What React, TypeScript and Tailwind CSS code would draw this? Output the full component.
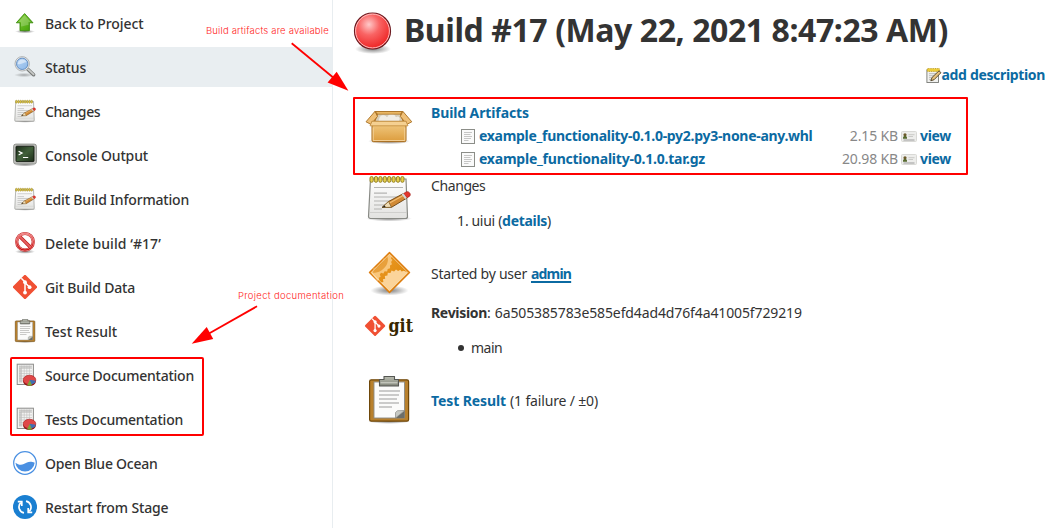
import type { ReactNode } from "react";

function Defs() {
  return (
    <svg className="absolute h-0 w-0" aria-hidden="true">
      <defs>
        <linearGradient id="green" x1="0" y1="0" x2="1" y2="1">
          <stop offset="0" stopColor="#8ad33c" />
          <stop offset="1" stopColor="#3f9f06" />
        </linearGradient>
        <radialGradient id="ball" cx="0.4" cy="0.32" r="0.65">
          <stop offset="0" stopColor="#ffc9c9" />
          <stop offset="0.45" stopColor="#f96464" />
          <stop offset="1" stopColor="#ef2929" />
        </radialGradient>
        <radialGradient id="shade">
          <stop offset="0" stopColor="#000" stopOpacity="0.5" />
          <stop offset="1" stopColor="#000" stopOpacity="0" />
        </radialGradient>
        <linearGradient id="paper" x1="0" y1="0" x2="0" y2="1">
          <stop offset="0" stopColor="#fff" />
          <stop offset="1" stopColor="#e2e2e0" />
        </linearGradient>
        <linearGradient id="card" x1="0" y1="0" x2="0" y2="1">
          <stop offset="0" stopColor="#f3cd88" />
          <stop offset="1" stopColor="#dc9c3c" />
        </linearGradient>
        <linearGradient id="gear" x1="0" y1="0" x2="1" y2="1">
          <stop offset="0" stopColor="#f0a030" />
          <stop offset="1" stopColor="#d98100" />
        </linearGradient>
        <linearGradient id="lens" x1="0" y1="0" x2="1" y2="1">
          <stop offset="0" stopColor="#b5d2f2" />
          <stop offset="1" stopColor="#8fbaea" />
        </linearGradient>
        <linearGradient id="screen" x1="0" y1="0" x2="1" y2="1">
          <stop offset="0" stopColor="#1d2d1a" />
          <stop offset="0.5" stopColor="#41603a" />
          <stop offset="1" stopColor="#1c2b19" />
        </linearGradient>
        <linearGradient id="stop" x1="0" y1="0" x2="0" y2="1">
          <stop offset="0" stopColor="#f08080" />
          <stop offset="1" stopColor="#c80f0f" />
        </linearGradient>
        <linearGradient id="clip" x1="0" y1="0" x2="0" y2="1">
          <stop offset="0" stopColor="#b9bcb0" />
          <stop offset="1" stopColor="#83867b" />
        </linearGradient>
      </defs>
    </svg>
  );
}

function UpArrow() {
  return (
    <svg viewBox="0 0 24 24" className="size-6">
      <ellipse cx="12" cy="20.500" rx="10" ry="1.800" fill="url(#shade)" />
      <path d="M11.600 2.600 20 11.800h-3.600v7.900H7v-7.900H3.300z" fill="url(#green)" stroke="#3a8a0c" strokeWidth="0.900" strokeLinejoin="round" />
      <path d="M11.600 4.200 17.800 11h-2.300v3c-3 0-5 1.500-7.500 1.500V11H5.400z" fill="#fff" opacity="0.220" />
    </svg>
  );
}

function Magnifier() {
  return (
    <svg viewBox="0 0 24 24" className="size-6">
      <ellipse cx="11" cy="20" rx="10" ry="2.200" fill="url(#shade)" opacity="0.600" />
      <path d="m14.800 14.300 5.800 5.400" stroke="#777a78" strokeWidth="3.600" strokeLinecap="round" />
      <path d="m15 14.100 5.600 5.200" stroke="#c9cbc9" strokeWidth="1.800" strokeLinecap="round" />
      <circle cx="9.200" cy="8.800" r="7.200" fill="#ececec" stroke="#a2a5a4" strokeWidth="0.800" />
      <circle cx="9.200" cy="8.800" r="5.700" fill="url(#lens)" stroke="#4d7cb6" strokeWidth="0.800" />
      <path d="M4.800 8.900c0-5 8-5.800 8.600-1.600-3 .2-5 2.600-8.600 1.600z" fill="#fff" opacity="0.500" />
    </svg>
  );
}

const rings = [5, 9.4, 13.8, 18.2, 22.6, 27, 31.4, 35.8];

function Notepad({ className }: { className: string }) {
  return (
    <svg viewBox="0 0 48 48" className={className}>
      <ellipse cx="24" cy="44.500" rx="23" ry="3" fill="url(#shade)" />
      <path d="M5.500 5h35.500l1.500 37.500a2 2 0 0 1-2 2h-35a2 2 0 0 1-2-2z" fill="url(#paper)" stroke="#888a85" strokeWidth="1.200" />
      <path d="M4.500 38.500h37.500" stroke="#c9c9c6" strokeWidth="0.800" />
      {rings.map((x) => (
        <rect key={x} x={x} y="2.500" width="3.200" height="5.800" rx="1.500" fill="#e4cd4a" stroke="#8f7a1c" strokeWidth="0.900" />
      ))}
      <path d="M9 13.500h29M9 19.200h13M9 23h25M9 27h22M9 31h11M9 35h8" stroke="#b4b4b2" strokeWidth="1.200" />
      <path d="m17 33.500 6.500-6 15-8 3.500 4.500-15.500 9.300z" fill="#d18a35" stroke="#6b4310" strokeWidth="0.900" strokeLinejoin="round" />
      <path d="m24.500 29 15-8.300" stroke="#f3bf74" strokeWidth="1.300" />
      <path d="m17 33.500 6.500-6 3 5.800z" fill="#efdcb5" stroke="#7a5a25" strokeWidth="0.700" />
      <path d="m17 33.500 2.600-2.300 1 1.700z" fill="#222" />
      <path d="m38.500 19.600 2.700-1.700c2.500-1.200 5.500 2.300 3.400 4.300l-2.500 1.700z" fill="#e3352c" stroke="#9c1a14" strokeWidth="0.600" />
      <path d="m36.600 20.300 1.900-1 3.400 4.700-1.800.9z" fill="#d6d6d6" />
    </svg>
  );
}

function Terminal() {
  return (
    <svg viewBox="0 0 24 24" className="size-6">
      <ellipse cx="12" cy="21.800" rx="11.500" ry="1.600" fill="url(#shade)" />
      <rect x="0.600" y="1.100" width="22.800" height="19.900" rx="2.200" fill="#bfc0bc" stroke="#8a8c88" strokeWidth="0.900" />
      <rect x="3" y="3.200" width="18" height="15.400" rx="0.800" fill="url(#screen)" stroke="#10160e" strokeWidth="0.900" />
      <path d="m5.600 8.200 3.500 1.900-3.500 1.900M10 14.500h5.200" fill="none" stroke="#fff" strokeWidth="1.200" />
    </svg>
  );
}

function Forbidden() {
  return (
    <svg viewBox="0 0 24 24" className="size-6">
      <ellipse cx="12" cy="20.600" rx="10" ry="2.200" fill="url(#shade)" />
      <circle cx="12" cy="10.800" r="8.300" fill="#fff" stroke="#c01818" strokeWidth="3.200" />
      <path d="m6.300 5.100 11.400 11.400" stroke="#c01818" strokeWidth="3.400" />
      <circle cx="12" cy="10.800" r="8.300" fill="none" stroke="#f6b4b4" strokeWidth="2.200" />
      <circle cx="12" cy="10.800" r="8.300" fill="none" stroke="url(#stop)" strokeWidth="1.500" />
      <path d="m6.300 5.100 11.400 11.400" stroke="#e56262" strokeWidth="2" />
    </svg>
  );
}

function GitMark() {
  return (
    <g>
      <path d="M10.900.4a1.500 1.500 0 0 1 2.200 0l10.500 10.500a1.500 1.500 0 0 1 0 2.200L13.100 23.600a1.500 1.500 0 0 1-2.200 0L.4 13.100a1.500 1.500 0 0 1 0-2.200z" fill="#f05033" />
      <path d="M8.300 3.300 12 7v10.800M12 7.500l4.600 4.700" fill="none" stroke="#fff" strokeWidth="1.500" />
      <g fill="#fff">
        <circle cx="12" cy="7.200" r="1.900" />
        <circle cx="12" cy="17.600" r="1.900" />
        <circle cx="16.600" cy="12.200" r="1.900" />
      </g>
    </g>
  );
}

function Clipboard({ className }: { className: string }) {
  return (
    <svg viewBox="0 0 48 48" className={className}>
      <ellipse cx="24" cy="45.500" rx="21" ry="2.400" fill="url(#shade)" />
      <rect x="4.600" y="3.800" width="39" height="41.400" rx="1.600" fill="#b8802c" stroke="#6f4709" strokeWidth="1.200" />
      <rect x="9" y="6" width="30.500" height="36" fill="#fbfbfa" stroke="#8a8a86" strokeWidth="0.900" />
      <path d="M14 15h21M14 19h20M14 23h18M14 27h20M14 31h13" stroke="#bcbcba" strokeWidth="1.600" />
      <path d="M39.500 34.500V42H30.500z" fill="#6c6e69" />
      <path d="M30.500 42v-5.500l2-1.800 7-.2z" fill="#c6c8c2" stroke="#888a85" strokeWidth="0.700" />
      <path d="M19 0.500h10.500v3H33.500v6.500h-19V3.500H19z" fill="url(#clip)" stroke="#555753" strokeWidth="1.100" strokeLinejoin="round" />
      <path d="M15.500 6.800h17" stroke="#d4d6ce" strokeWidth="1" />
    </svg>
  );
}

function Report() {
  return (
    <svg viewBox="0 0 24 24" className="size-6">
      <rect x="4.200" y="1.200" width="16.200" height="20.300" fill="#f4f4f3" stroke="#8b8b89" strokeWidth="1" />
      <path d="M6 3h12.800v2H6zM6 4.500h2.500v15H6z" fill="#cfcfce" />
      <path d="M6 3h13M6 5.500h13M6 8h13M6 10.500h13M6 13h13M6 15.500h13M6 18h13M8.600 2.500v17M11.200 2.500v17M13.800 2.500v17M16.400 2.500v17" stroke="#bdbdbc" strokeWidth="0.600" />
      <ellipse cx="16.500" cy="18.800" rx="6.300" ry="4.100" fill="#8c1515" />
      <ellipse cx="16.500" cy="16.900" rx="6.300" ry="4.700" fill="#e04848" stroke="#a81b1b" strokeWidth="0.600" />
      <path d="M16.800 16.700v4.800c3-.1 5.500-1.300 5.900-3.800z" fill="#3f6fb5" />
      <path d="M16.800 17 14 22.300c2 .7 3.600.5 5-.1z" fill="#7ba53a" />
    </svg>
  );
}

function BlueOcean() {
  return (
    <svg viewBox="0 0 24 24" className="size-6">
      <circle cx="12" cy="12" r="11.300" fill="#fff" stroke="#4a90e2" strokeWidth="1.200" />
      <path d="M2.400 11.800c2.600 1.600 5.200 3 8.400 1.300 3.400-1.900 6-3.600 10.900-1.300A9.700 9.700 0 0 1 2.400 11.800z" fill="#4a90e2" />
    </svg>
  );
}

function Restart() {
  return (
    <svg viewBox="0 0 24 24" className="size-6">
      <circle cx="12" cy="12" r="12" fill="#1a7fd1" />
      <g fill="none" stroke="#fff" strokeWidth="1.700">
        <path d="M11 17.800A6 6 0 0 1 7.800 7.600" />
        <path d="M13 6.200a6 6 0 0 1 3.200 10.200" />
        <path d="M4.800 6.700h4v4.200" />
        <path d="M19.200 17.300h-4v-4.200" />
      </g>
    </svg>
  );
}

function StatusBall() {
  return (
    <svg viewBox="0 0 40 44" className="h-[44px] w-[40px]">
      <ellipse cx="20" cy="38" rx="18" ry="5" fill="url(#shade)" />
      <circle cx="19.500" cy="20" r="18" fill="url(#ball)" stroke="#6b1c22" strokeWidth="1.200" />
      <circle cx="19.500" cy="20" r="16.900" fill="none" stroke="#fbb" strokeWidth="1" />
    </svg>
  );
}

function PackageBox() {
  return (
    <svg viewBox="0 0 48 48" className="size-12">
      <ellipse cx="24" cy="40.200" rx="21" ry="3.200" fill="url(#shade)" />
      <path d="M7 21 10 10.500h27.500L41 21z" fill="#a8691c" stroke="#8f5a10" strokeWidth="0.900" />
      <path d="M10.500 20 13 13h22l2.500 7z" fill="#d9cdb6" />
      <path d="M14 17c2-5 7-3 8-1 2-5 8-4 9 0 2-2 4 0 4 2l-1 3H13z" fill="#f0ede6" stroke="#c9c4b8" strokeWidth="0.500" />
      <path d="M10 10.500h27.500l-2.200 2.700H12.800z" fill="#e9b765" stroke="#a87022" strokeWidth="0.700" />
      <path d="M10 10.300 1 20.800l5 2.600 6.500-8z" fill="#efc078" stroke="#a87022" strokeWidth="0.900" strokeLinejoin="round" />
      <path d="m37.800 10.300 9 10.500-5 2.600-6.500-8z" fill="#efc078" stroke="#a87022" strokeWidth="0.900" strokeLinejoin="round" />
      <path d="M7 20.500h34v18.700a1.500 1.500 0 0 1-1.500 1.500h-31A1.500 1.500 0 0 1 7 39.200z" fill="url(#card)" stroke="#a3681a" strokeWidth="1" />
      <path d="M7 20.200h34l2 4.600H5z" fill="#f5d091" stroke="#c08a3c" strokeWidth="0.800" strokeLinejoin="round" />
      <path d="M8.200 26.500v13h31.600v-13" fill="none" stroke="#f7dba9" strokeWidth="0.800" />
    </svg>
  );
}

function Gears() {
  return (
    <svg viewBox="0 0 48 48" className="size-12">
      <ellipse cx="24.500" cy="40.500" rx="19" ry="5" fill="url(#shade)" />
      <path d="M24.500 2.500 44.500 22.500 24.500 42.500 4.500 22.500z" fill="url(#gear)" stroke="#dd7c0e" strokeWidth="1.400" strokeLinejoin="round" />
      <path d="M42.800 22.500 24.500 40.800l-8.300-8.300 2.200-.6-.5-2.600 2.300-.6-.4-2.800 2.600-.4.400-2.700 2.600.3 1.200-2.500 2.500 1 1.900-2 2.100 1.400 2.200-1.300 1.300 1.900 2.200-.9z" fill="#fbd49a" />
      <path d="m22.700 6.300 1.800-2 2.300 2.300-.9 2 1.500 1.500-1.300 2 .9 2.200-2 1.300.1 2.600-2.400.7-.6 2.500-2.500-.2-1.200 2.200-2.400-.7-1.200 1.800.9 2.200-1.900 1 .4 2.300-1.700.7-6.300-7.900 3-2.700c6-1.300 12.500-5.800 13.500-13.500z" fill="#f8c67c" />
      <path d="M20.500 8.300c.3 6-5 12-12.300 12.200" fill="none" stroke="#e8a03c" strokeWidth="5" />
      <path d="M24.500 4.200 42.800 22.500 24.500 40.800 6.200 22.500z" fill="none" stroke="#fff" strokeOpacity="0.550" strokeWidth="0.900" />
    </svg>
  );
}

function GitLogo() {
  return (
    <svg viewBox="0 0 48 48" className="size-12 overflow-visible">
      <g transform="translate(0 14.800) scale(0.840)">
        <GitMark />
      </g>
      <text x="23.500" y="30.500" textLength="24.500" lengthAdjust="spacingAndGlyphs" className="font-['DejaVu_Serif',serif] text-[18.5px] font-bold" fill="#362701">
        git
      </text>
    </svg>
  );
}

function FileIcon() {
  return (
    <svg viewBox="0 0 14 16" className="h-4 w-[14px]">
      <rect x="0.500" y="1.500" width="13" height="14" fill="#fafafa" stroke="#8b8d88" />
      <path d="M3 4.500h8M3 6.500h6.500M3 8.500h8M3 10.500h7M3 12.500h4.500" stroke="#c0c0be" strokeWidth="0.900" />
    </svg>
  );
}

function ViewIcon() {
  return (
    <svg viewBox="0 0 16 16" className="size-4">
      <rect x="0.500" y="3.500" width="15" height="10" rx="1" fill="#ededeb" stroke="#d6d6d3" strokeWidth="0.900" />
      <circle cx="4" cy="6.800" r="1.600" fill="#6b5a2a" />
      <path d="M2 10.800V9.500c0-2 4-2 4 0v1.300z" fill="#55692e" />
      <path d="M7.500 6.700h6M7.500 8.500h4.500" stroke="#c0c0be" strokeWidth="0.800" />
      <path d="M2.500 12h11" stroke="#888" strokeWidth="0.800" />
    </svg>
  );
}

function NoteIcon() {
  return (
    <svg viewBox="0 0 16 16" className="size-4">
      <rect x="0.900" y="3" width="11.600" height="12.500" fill="#f1f1ef" stroke="#777974" strokeWidth="0.900" />
      <rect x="1.200" y="1.600" width="12.400" height="2.800" rx="0.600" fill="#f0d03a" stroke="#b08d10" strokeWidth="0.800" strokeDasharray="1 0.800" />
      <path d="M3 6.700h7M3 8.700h5M3 10.700h3M3 12.700h3" stroke="#b5b5b2" strokeWidth="0.900" />
      <path d="m4.800 13.800 1.200-3.300 7-6.700 2 1.900-6.900 7z" fill="#e5c07d" stroke="#3b2d12" strokeWidth="0.800" strokeLinejoin="round" />
    </svg>
  );
}

const tasks: { label: string; icon: ReactNode; track: string; active?: boolean }[] = [
  { label: "Back to Project", icon: <UpArrow />, track: "tracking-[-0.09px]" },
  { label: "Status", icon: <Magnifier />, track: "tracking-[-0.15px]", active: true },
  { label: "Changes", icon: <Notepad className="size-6" />, track: "tracking-[-0.4px]" },
  { label: "Console Output", icon: <Terminal />, track: "tracking-[-0.14px]" },
  { label: "Edit Build Information", icon: <Notepad className="size-6" />, track: "tracking-[-0.18px]" },
  { label: "Delete build ‘#17’", icon: <Forbidden />, track: "tracking-[0.06px]" },
  { label: "Git Build Data", icon: <svg viewBox="0 0 24 24" className="size-6"><GitMark /></svg>, track: "tracking-[-0.16px]" },
  { label: "Test Result", icon: <Clipboard className="size-6" />, track: "tracking-[-0.03px]" },
  { label: "Source Documentation", icon: <Report />, track: "tracking-[-0.23px]" },
  { label: "Tests Documentation", icon: <Report />, track: "tracking-[-0.2px]" },
  { label: "Open Blue Ocean", icon: <BlueOcean />, track: "tracking-[-0.24px]" },
  { label: "Restart from Stage", icon: <Restart />, track: "tracking-[-0.13px]" },
];

const files = [
  { name: "example_functionality-0.1.0-py2.py3-none-any.whl", size: "2.15 KB", track: "tracking-[-0.29px]" },
  { name: "example_functionality-0.1.0.tar.gz", size: "20.98 KB", track: "tracking-[-0.223px]" },
];

const link = "font-bold text-[#0b6aa2]";

function Section({ icon, className, children }: { icon: ReactNode; className: string; children: ReactNode }) {
  return (
    <section className={`flex gap-[18px] pl-8 ${className}`}>
      <div className="w-12 shrink-0">{icon}</div>
      <div className="flex w-[520px] flex-col">{children}</div>
    </section>
  );
}

function Annotations() {
  return (
    <div className="pointer-events-none absolute inset-0 font-['Inter',sans-serif] text-[9.5px] font-light leading-3 text-[#ff2222]">
      <div className="absolute left-[353px] top-[97px] h-[78px] w-[615px] rounded-[1px] border-2 border-[#f00]" />
      <div className="absolute left-[10px] top-[357px] h-[79px] w-[194px] rounded-[2px] border-2 border-[#f00]" />
      <span className="absolute left-[206px] top-[25px] tracking-[0.18px]">Build artifacts are available</span>
      <span className="absolute left-[238px] top-[290px] tracking-[0.32px]">Project documentation</span>
      <svg viewBox="0 0 1056 528" className="absolute inset-0 h-full w-full" fill="#f00" stroke="none">
        <path d="M291.700 43.300 335 79" stroke="#f00" strokeWidth="1.800" />
        <path d="M348.400 90.800 336.700 71.700 327.600 82.400z" />
        <path d="M257 306.300 209 333.500" stroke="#f00" strokeWidth="1.800" />
        <path d="M191.700 343.700 206.700 327 213.200 339z" />
      </svg>
    </div>
  );
}

export default function App() {
  return (
    <div className="relative flex h-[528px] w-[1056px] overflow-hidden whitespace-nowrap bg-white font-['Noto_Sans',sans-serif] text-[14px] leading-5 text-[#333]">
      <Defs />
      <nav className="flex w-[333px] shrink-0 flex-col gap-1 border-r border-[#e8edf0] pt-[3px]">
        {tasks.map((t) => (
          <a key={t.label} className={`flex h-10 shrink-0 items-center gap-2 pl-[13px] font-medium ${t.active ? "bg-[#e9eef1]" : ""} ${t.track}`}>
            {t.icon}
            <span className="pt-[2px]">{t.label}</span>
          </a>
        ))}
      </nav>
      <main className="flex w-[723px] flex-col">
        <header className="flex h-[62px] items-center gap-[11px] pl-5">
          <div className="pt-1">
            <StatusBall />
          </div>
          <h1 className="pb-[2px] text-[32px] font-bold leading-10 tracking-[-0.42px]">Build #17 (May 22, 2021 8:47:23 AM)</h1>
        </header>
        <div className="flex h-[39px] items-start justify-end pr-[11px] pt-[3px]">
          <div className="flex items-center">
            <NoteIcon />
            <a className={`${link} tracking-[-0.34px]`}>add description</a>
          </div>
        </div>

        <Section icon={<PackageBox />} className="h-[70px]">
          <div className={`-mb-px flex h-6 items-center ${link} tracking-[-0.11px]`}>Build Artifacts</div>
          {files.map((f) => (
            <div key={f.name} className="flex h-[23px] items-center pl-[30px]">
              <FileIcon />
              <a className={`ml-1 ${link} ${f.track}`}>{f.name}</a>
              <span className="ml-auto mr-[3px] tracking-[-0.15px] text-[#888]">{f.size}</span>
              <ViewIcon />
              <a className={`ml-[3px] ${link} tracking-[-0.31px]`}>view</a>
            </div>
          ))}
        </Section>

        <Section icon={<div className="pt-[3px]"><Notepad className="size-12" /></div>} className="h-[70px]">
          <div className="flex h-[30px] items-center tracking-[-0.4px]">Changes</div>
          <div className="flex h-10 items-center pl-[26px]">
            <span className="w-[14.5px]">1.</span>
            <span className="whitespace-pre tracking-[-0.3px]">uiui (</span>
            <a className={`${link} tracking-[-0.29px]`}>details</a>
            <span>)</span>
          </div>
        </Section>

        <Section icon={<Gears />} className="mt-[9px] h-12">
          <div className="flex h-12 items-center gap-1">
            <span className="tracking-[-0.25px]">Started by user</span>
            <a className={`${link} tracking-[-0.8px] underline decoration-2 underline-offset-2`}>admin</a>
          </div>
        </Section>

        <Section icon={<div className="pt-[3px]"><GitLogo /></div>} className="h-[70px]">
          <div className="flex h-[30px] items-center">
            <b className="tracking-[-0.31px]">Revision</b>
            <span>:</span>
            <span className="ml-1 tracking-[-0.12px]">6a505385783e585efd4ad4d76f4a41005f729219</span>
          </div>
          <div className="flex h-10 items-center gap-[7px] pl-[27px]">
            <i className="size-[6px] rounded-full bg-[#333]" />
            <span className="tracking-[-0.5px]">main</span>
          </div>
        </Section>

        <Section icon={<Clipboard className="-mt-px size-12" />} className="mt-[9px] h-12">
          <div className="flex h-12 items-center gap-1">
            <a className={`${link} tracking-[-0.1px]`}>Test Result</a>
            <span className="tracking-[-0.16px]">(1 failure / ±0)</span>
          </div>
        </Section>
      </main>
      <Annotations />
    </div>
  );
}
